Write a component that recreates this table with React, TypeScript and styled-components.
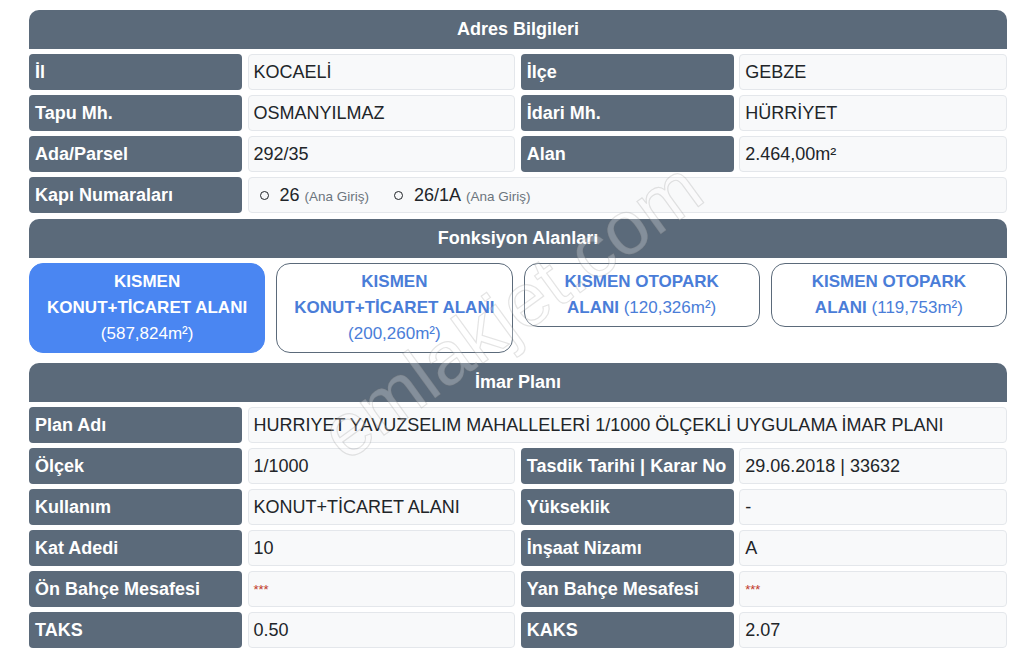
import React from "react";
import styled, { createGlobalStyle } from "styled-components";

const GlobalStyle = createGlobalStyle`
  html, body {
    margin: 0;
    padding: 0;
    background: #ffffff;
  }
  body {
    font-family: "Liberation Sans", Arial, sans-serif;
    color: #212529;
  }
  * {
    box-sizing: border-box;
  }
`;

const Page = styled.div`
  position: relative;
  display: flex;
  flex-direction: column;
  gap: 6px;
  margin: 10px 8px 0 29px;
  overflow: hidden;
`;

const Section = styled.section`
  display: flex;
  flex-direction: column;
  gap: 5px;
`;

const SectionHeader = styled.h3`
  margin: 0;
  height: 39px;
  display: flex;
  align-items: center;
  justify-content: center;
  background: #5b6a7a;
  color: #ffffff;
  font-size: 18px;
  font-weight: 700;
  border-radius: 10px 10px 0 0;
`;

const InfoGrid = styled.div`
  display: grid;
  grid-template-columns: 213px 1fr 213px 1fr;
  grid-auto-rows: 36px;
  column-gap: 5.5px;
  row-gap: 5px;
`;

const Label = styled.div`
  display: flex;
  align-items: center;
  padding-left: 6px;
  background: #5b6a7a;
  color: #ffffff;
  font-size: 18px;
  font-weight: 700;
  border-radius: 4px;
  white-space: nowrap;
`;

const Value = styled.div<{ $wide?: boolean }>`
  display: flex;
  align-items: center;
  padding-left: 5px;
  background: #f8f9fa;
  border: 1px solid #e4e7eb;
  border-radius: 4px;
  font-size: 18px;
  color: #212529;
  white-space: nowrap;
  grid-column: ${(p) => (p.$wide ? "span 3" : "auto")};
`;

const Hidden = styled.span`
  color: #c0392b;
  font-size: 13px;
`;

const DoorList = styled.ul`
  display: flex;
  align-items: center;
  gap: 25px;
  margin: 0;
  padding: 0 0 0 6px;
  list-style: none;
`;

const DoorItem = styled.li`
  display: flex;
  align-items: center;
  gap: 5px;
  font-size: 18px;

  &::before {
    content: "";
    width: 7px;
    height: 7px;
    border: 1.6px solid #212529;
    border-radius: 50%;
    margin-right: 6px;
  }
`;

const DoorNote = styled.span`
  font-size: 13.5px;
  color: #6c757d;
  padding-top: 2px;
`;

const CardRow = styled.div`
  display: flex;
  align-items: flex-start;
  gap: 11px;
  margin-bottom: 4px;
`;

const FunctionCard = styled.div<{ $active?: boolean }>`
  flex: 1;
  padding: 5px 13px 5px;
  text-align: center;
  font-size: 17px;
  line-height: 26px;
  border-radius: 14px;
  border: 1px solid ${(p) => (p.$active ? "#4a86f2" : "#5b6a7a")};
  background: ${(p) => (p.$active ? "#4a86f2" : "#ffffff")};
  color: ${(p) => (p.$active ? "#ffffff" : "#4a7dd8")};

  b {
    font-weight: 700;
  }
`;

const Watermark = styled.div`
  position: absolute;
  left: 482px;
  top: 300px;
  transform: translate(-50%, -50%) rotate(-36deg);
  font-family: "Liberation Sans", Arial, sans-serif;
  font-size: 76px;
  color: rgba(255, 255, 255, 0.25);
  -webkit-text-stroke: 1.2px rgba(120, 120, 120, 0.2);
  white-space: nowrap;
  pointer-events: none;
`;

type Cell = { label: string; value: React.ReactNode; wide?: boolean };

const hidden = <Hidden>***</Hidden>;

const adresRows: Cell[] = [
  { label: "İl", value: "KOCAELİ" },
  { label: "İlçe", value: "GEBZE" },
  { label: "Tapu Mh.", value: "OSMANYILMAZ" },
  { label: "İdari Mh.", value: "HÜRRİYET" },
  { label: "Ada/Parsel", value: "292/35" },
  { label: "Alan", value: "2.464,00m²" },
  {
    label: "Kapı Numaraları",
    wide: true,
    value: (
      <DoorList>
        <DoorItem>
          26 <DoorNote>(Ana Giriş)</DoorNote>
        </DoorItem>
        <DoorItem>
          26/1A <DoorNote>(Ana Giriş)</DoorNote>
        </DoorItem>
      </DoorList>
    ),
  },
];

const imarRows: Cell[] = [
  {
    label: "Plan Adı",
    wide: true,
    value: "HURRIYET YAVUZSELIM MAHALLELERİ 1/1000 ÖLÇEKLİ UYGULAMA İMAR PLANI",
  },
  { label: "Ölçek", value: "1/1000" },
  { label: "Tasdik Tarihi | Karar No", value: "29.06.2018 | 33632" },
  { label: "Kullanım", value: "KONUT+TİCARET ALANI" },
  { label: "Yükseklik", value: "-" },
  { label: "Kat Adedi", value: "10" },
  { label: "İnşaat Nizamı", value: "A" },
  { label: "Ön Bahçe Mesafesi", value: hidden },
  { label: "Yan Bahçe Mesafesi", value: hidden },
  { label: "TAKS", value: "0.50" },
  { label: "KAKS", value: "2.07" },
];

const functions = [
  { name: "KISMEN KONUT+TİCARET ALANI", area: "587,824m²", active: true },
  { name: "KISMEN KONUT+TİCARET ALANI", area: "200,260m²" },
  { name: "KISMEN OTOPARK ALANI", area: "120,326m²" },
  { name: "KISMEN OTOPARK ALANI", area: "119,753m²" },
];

const InfoTable = ({ rows }: { rows: Cell[] }) => (
  <InfoGrid>
    {rows.map((cell) => (
      <React.Fragment key={cell.label}>
        <Label>{cell.label}</Label>
        <Value $wide={cell.wide}>{cell.value}</Value>
      </React.Fragment>
    ))}
  </InfoGrid>
);

const App = () => {
  return (
    <>
      <GlobalStyle />
      <Page>
        <Section>
          <SectionHeader>Adres Bilgileri</SectionHeader>
          <InfoTable rows={adresRows} />
        </Section>

        <Section>
          <SectionHeader>Fonksiyon Alanları</SectionHeader>
          <CardRow>
            {functions.map((f, i) => (
              <FunctionCard key={i} $active={f.active}>
                <b>{f.name}</b> ({f.area})
              </FunctionCard>
            ))}
          </CardRow>
        </Section>

        <Section>
          <SectionHeader>İmar Planı</SectionHeader>
          <InfoTable rows={imarRows} />
        </Section>

        <Watermark>emlakjet.com</Watermark>
      </Page>
    </>
  );
};

export default App;
